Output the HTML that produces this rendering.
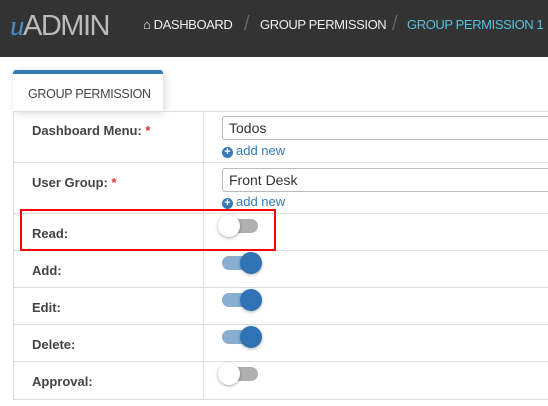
<!DOCTYPE html><html><head><style>
body{margin:0;width:548px;height:406px;overflow:hidden;background:#fff;font-family:"Liberation Sans",sans-serif;position:relative}
.hd{position:absolute;left:0;top:0;width:548px;height:57px;background:#333}
.logo{position:absolute;left:10px;top:10px;font-size:29px;color:#bbb;letter-spacing:-1.5px;white-space:nowrap}
.logo i{color:#4a8ec8;font-family:"Liberation Serif",serif}
.bc{position:absolute;top:17px;font-size:13px;color:#eee;white-space:nowrap;letter-spacing:-0.4px}
.sep{position:absolute;top:13px;color:#666;font-size:20px}
.tab{position:absolute;left:13px;top:70px;width:150px;height:41px;border-top:4px solid #337ab7;border-radius:3px 3px 0 0;box-shadow:2px 2px 8px rgba(0,0,0,.15);background:#fff;box-sizing:border-box;font-size:12.5px;color:#444;padding:13px 0 0 15px;white-space:nowrap;letter-spacing:-0.3px}
.row{position:absolute;left:13px;width:540px;border-bottom:1px solid #ddd;border-left:1px solid #ddd}
.lab{position:absolute;left:19px;font-size:13px;font-weight:bold;color:#444}
.lab b{color:#d33}
.vl{position:absolute;left:203px;top:111px;width:1px;height:289px;background:#ddd}
.inp{position:absolute;left:222px;width:340px;height:24px;border:1px solid #bbb;border-radius:3px;font-size:14px;color:#333;padding:3px 0 0 6px;box-sizing:border-box}
.add{position:absolute;left:222px;font-size:13px;color:#337ab7;white-space:nowrap}
.add span{display:inline-block;width:11px;height:11px;border-radius:50%;background:#337ab7;color:#fff;font-size:11px;line-height:11px;text-align:center;font-weight:bold;vertical-align:0px;margin-right:3px}
.tr{position:absolute;left:222px;width:36px;height:14px;border-radius:7px}
.off{background:#b0b0b0}.on{background:#8aaed0}
.kn{position:absolute;width:22px;height:22px;border-radius:50%;top:-4px}
.off .kn{left:-4px;background:#fff;box-shadow:0 1px 3px rgba(0,0,0,.35)}
.on .kn{left:18px;background:#2f73b5;box-shadow:0 1px 3px rgba(0,0,0,.3)}
</style></head><body>
<div class="hd">
<div class="logo"><i>u</i>ADMIN</div>
<div class="bc" style="left:143px">&#8962; DASHBOARD</div>
<div class="sep" style="left:244px">/</div>
<div class="bc" style="left:260px">GROUP PERMISSION</div>
<div class="sep" style="left:392px">/</div>
<div class="bc" style="left:407px;color:#5bc0de">GROUP PERMISSION 1</div>
</div>
<div class="tab">GROUP PERMISSION</div>
<div class="row" style="top:111px;height:50px;border-top:1px solid #ddd"></div>
<div class="row" style="top:161px;height:52px"></div>
<div class="row" style="top:214px;height:36px"></div>
<div class="row" style="top:251px;height:36px"></div>
<div class="row" style="top:288px;height:36px"></div>
<div class="row" style="top:325px;height:36px"></div>
<div class="row" style="top:362px;height:37px"></div>
<div class="vl"></div>
<div class="lab" style="left:32px;top:123px">Dashboard Menu: <b>*</b></div>
<div class="inp" style="top:116px">Todos</div>
<div class="add" style="top:143px"><span>+</span>add new</div>
<div class="lab" style="left:32px;top:175px">User Group: <b>*</b></div>
<div class="inp" style="top:168px">Front Desk</div>
<div class="add" style="top:194px"><span>+</span>add new</div>
<div class="lab" style="left:32px;top:226px">Read:</div>
<div class="lab" style="left:32px;top:263px">Add:</div>
<div class="lab" style="left:32px;top:300px">Edit:</div>
<div class="lab" style="left:32px;top:337px">Delete:</div>
<div class="lab" style="left:32px;top:374px">Approval:</div>
<div class="tr off" style="top:219px"><div class="kn"></div></div>
<div class="tr on" style="top:256px"><div class="kn"></div></div>
<div class="tr on" style="top:293px"><div class="kn"></div></div>
<div class="tr on" style="top:330px"><div class="kn"></div></div>
<div class="tr off" style="top:367px"><div class="kn"></div></div>
<div style="position:absolute;left:20px;top:209px;width:252px;height:38px;border:2px solid #f00"></div>
</body></html>
